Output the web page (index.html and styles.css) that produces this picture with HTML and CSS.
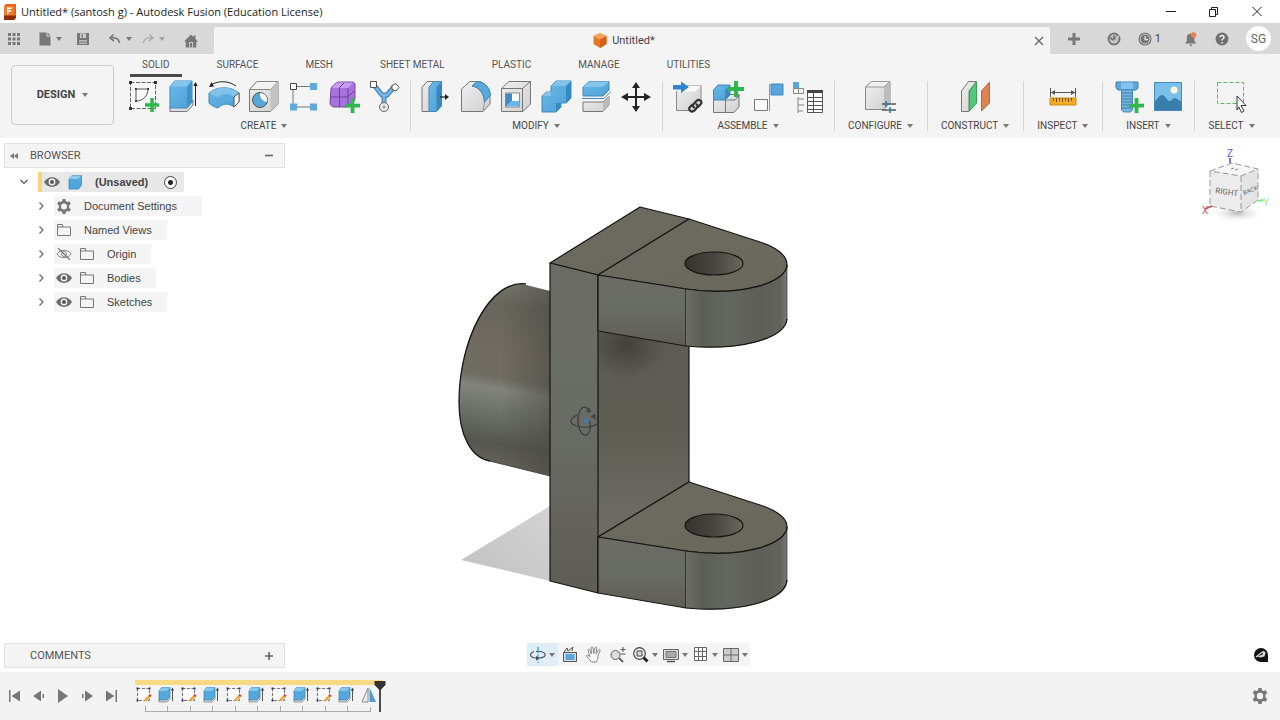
FILE: index.html
```html
<!DOCTYPE html>
<html lang="en">
<head>
<meta charset="utf-8">
<title>Untitled* (santosh g) - Autodesk Fusion (Education License)</title>
<link rel="stylesheet" href="styles.css">
</head>
<body>
<svg class="defs" aria-hidden="true">
  <defs>
    <linearGradient id="gBlue" x1="0" y1="0" x2="1" y2="1"><stop offset="0" stop-color="#6db9e8"/><stop offset="1" stop-color="#4b9fd6"/></linearGradient>
    <linearGradient id="gGray" x1="0" y1="0" x2="1" y2="1"><stop offset="0" stop-color="#f0f0f0"/><stop offset="1" stop-color="#cfcfcf"/></linearGradient>
  </defs>
  <symbol id="plus" viewBox="0 0 12 12"><path d="M4.500 0h3v4.500H12v3H7.500V12h-3V7.500H0v-3h4.500z" fill="#2eb84c"/></symbol>
  <symbol id="eye" viewBox="0 0 16 12"><path d="M0 6C4-.5 12-.5 16 6 12 12.500 4 12.500 0 6z" fill="#6a6a6a"/><circle cx="8" cy="6" r="3.400" fill="#f4f4f4"/><circle cx="8" cy="6" r="2" fill="#555"/></symbol>
  <symbol id="folder" viewBox="0 0 16 14"><path d="M1.500 12.500v-11h5v2.500h8v8.500zM1.500 4h5" fill="none" stroke="#777"/></symbol>
  <symbol id="chevron" viewBox="0 0 10 10"><path d="M3.500 1.500 7 5 3.500 8.500" fill="none" stroke="#666" stroke-width="1.200"/></symbol>
  <symbol id="gear" viewBox="0 0 16 16"><path fill-rule="evenodd" fill="#777" d="M6.500 0h3l.5 2.300 1.500.8 2.200-.8 1.600 2.700-1.800 1.600v2.800l1.800 1.600-1.600 2.700-2.200-.8-1.500.8-.5 2.300h-3L6 13.700l-1.500-.8-2.200.8L.7 11l1.800-1.600V6.600L.7 5l1.600-2.700 2.200.8L6 2.300zM8 4.800a3.200 3.200 0 1 0 0 6.400 3.200 3.200 0 0 0 0-6.400z"/></symbol>
  <symbol id="tl-sketch" viewBox="0 0 18 18"><path d="M2.500 2.500h12v12h-12z" fill="#fff" stroke="#777" stroke-dasharray="3 1.500"/><path d="M1.500 1.500h2v2h-2zM13.500 1.500h2v2h-2zM1.500 13.500h2v2h-2z" fill="#335"/><path d="m9 15.500.8-2.500 4-4 1.800 1.800-4 4z" fill="#f0a030"/><path d="m13.500 9 1.200-1 1.800 1.700-1.200 1.200z" fill="#d33"/></symbol>
  <symbol id="tl-extrude" viewBox="0 0 18 18"><path d="M2 13h8l3-3v3l-3 3H2z" fill="#ddd" stroke="#777" stroke-width=".7"/><path d="m2 5 2.500-3.500H13V10l-3 4H2z" fill="#55a8dd" stroke="#357fae" stroke-width=".7"/><path d="m2 5 2.500-3.500H13L10 5z" fill="#85c9ef"/><path d="M15.500 15V4" stroke="#555"/><path d="m13.800 4.500 1.700-3 1.700 3z" fill="#444"/></symbol>
</svg>

<header class="titlebar">
  <svg class="app-icon" width="14" height="16" viewBox="0 0 14 16"><path d="M1 2 3 0h10v13l-2 3H1z" fill="#e8641b"/><path d="M1 2h10v14H1z" fill="#f07a2c"/><path d="M1 11.500h12V14l-2 2H1z" fill="#8c2d06"/><path d="M4.700 10V4.200h4M4.700 7h3.400" fill="none" stroke="#fff" stroke-width="1.400"/></svg>
  <h1 class="window-title">Untitled* (santosh g) - Autodesk Fusion (Education License)</h1>
  <div class="window-buttons">
    <button aria-label="Minimize"><svg width="12" height="12"><path d="M1 5.500h10" stroke="#222"/></svg></button>
    <button aria-label="Restore"><svg width="12" height="12" fill="none" stroke="#222"><path d="M1.500 3.500h6v7h-6zM3.500 3.500v-2h6v7h-2"/></svg></button>
    <button aria-label="Close"><svg width="12" height="12"><path d="m1.500 1 9 9m0-9-9 9" stroke="#222"/></svg></button>
  </div>
</header>

<div class="appbar">
  <div class="quick">
    <button class="q-grid" aria-label="Data panel"><svg width="14" height="14" fill="#777"><path d="M1 1h3v3H1zM5.500 1h3v3h-3zM10 1h3v3h-3zM1 5.500h3v3H1zM5.500 5.500h3v3h-3zM10 5.500h3v3h-3zM1 10h3v3H1zM5.500 10h3v3h-3zM10 10h3v3h-3z"/></svg></button>
    <button class="q-file" aria-label="File"><svg width="14" height="16"><path d="M1.500 1.500h7v4h4v9h-11z" fill="#777"/><path d="m9.500 1.500 3 3h-3z" fill="#777"/></svg><span class="caret"></span></button>
    <button class="q-save" aria-label="Save"><svg width="14" height="14"><path d="M1 1h12v12H1z" fill="#777"/><path d="M4 1.500h6V6H4z" fill="#d0d0d0"/><path d="M5.500 2.500h1.500v3H5.500z" fill="#777"/><path d="M3 8h8v4H3z" fill="#bbb"/><path d="M3 10h8" stroke="#777"/></svg></button>
    <button class="q-undo" aria-label="Undo"><svg width="14" height="14"><path d="M5.500 2.500 2 6l4 3M2.500 6c5-.8 8.500.5 9 5" fill="none" stroke="#777" stroke-width="1.600"/></svg><span class="caret"></span></button>
    <button class="q-redo" aria-label="Redo"><svg width="14" height="14"><path d="M8.500 2.500 12 6 8 9M11.500 6c-5-.8-8.500.5-9 5" fill="none" stroke="#a8a8a8" stroke-width="1.300"/></svg><span class="caret dim"></span></button>
    <button class="q-home" aria-label="Home"><svg width="16" height="16"><path d="m1 8.500 7-7 2.500 2.500V2.500h2V6L15 8.500h-1.700v6H2.700v-6z" fill="#777"/><path d="M6 9h4v5.500H6z" fill="#c8c8c8"/><path d="M7 10h2v4H7z" fill="#777"/></svg></button>
  </div>
  <div class="doc-tab">
    <div class="doc-name"><svg width="14" height="15"><path d="m7 0 6.500 3v8L7 15 .5 11V3z" fill="#e8772a"/><path d="m7 0 6.500 3L7 6.500.5 3z" fill="#f8a75e"/><path d="M7 6.500 13.500 3v8L7 15z" fill="#d85f15"/></svg><span>Untitled*</span></div>
    <button aria-label="Close document"><svg width="10" height="10"><path d="m1 1 8 8m0-8L1 9" stroke="#666" stroke-width="1.300"/></svg></button>
  </div>
  <div class="account">
    <button class="a-new" aria-label="New tab"><svg width="14" height="14"><path d="M7 1v12M1 7h12" stroke="#777" stroke-width="3"/></svg></button>
    <button class="a-ext" aria-label="Extensions"><svg width="14" height="14"><circle cx="7" cy="7" r="5.500" fill="#c8c8c8" stroke="#777" stroke-width="2"/><path d="M7 3.500v3.500l4-3.500M3 5.500l3 2.500" fill="none" stroke="#777" stroke-width="1.800"/><path d="m9 6 3-2" stroke="#e0e0e0" stroke-width="1.500"/></svg></button>
    <button class="a-jobs" aria-label="Job status"><svg width="14" height="14"><circle cx="7" cy="7" r="6" fill="#ccc" stroke="#777" stroke-width="1.200"/><circle cx="7" cy="7" r="4.500" fill="#777"/><path d="M7 4v3.500h3" fill="none" stroke="#ddd" stroke-width="1.300"/></svg><span>1</span></button>
    <button class="a-bell" aria-label="Notifications"><svg width="14" height="16"><path d="M1 12.500 2.800 10V6.500a3.800 3.800 0 0 1 7.600 0V10l1.800 2.500zM5 13.500h3.500L7 15.500z" fill="#777"/><circle cx="9.500" cy="4" r="2.800" fill="#f27a4a"/></svg></button>
    <button class="a-help" aria-label="Help"><svg width="14" height="14"><circle cx="7" cy="7" r="6.500" fill="#707070"/><path d="M5 5.300c0-2.500 4-2.500 4 0C9 6.800 7 6.800 7 8.500M7 10v1.500" fill="none" stroke="#eee" stroke-width="1.500"/></svg></button>
    <button class="avatar">SG</button>
  </div>
</div>

<section class="ribbon">
  <button class="workspace">DESIGN<span class="caret"></span></button>
  <div class="ribbon-main">
    <nav class="tabs">
      <button class="tab active">SOLID</button><button class="tab">SURFACE</button><button class="tab">MESH</button><button class="tab">SHEET METAL</button><button class="tab">PLASTIC</button><button class="tab">MANAGE</button><button class="tab">UTILITIES</button>
    </nav>
    <div class="groups">
      <div class="group">
        <div class="tools">
          <button aria-label="Create Sketch"><svg width="32" height="34"><path d="M2.500 2.500h25v26h-25z" fill="#f8f8f8" stroke="#666" stroke-dasharray="4 1.500"/><g fill="#333"><path d="M1 1h3v3H1zM26 1h3v3h-3zM1 27h3v3H1z"/><path d="M7 8h2v2H7zM19 8h2v2h-2zM7 20h2v2H7z"/></g><path d="M8 21V9h12c0 7-5 12-12 12z" fill="none" stroke="#555"/><use href="#plus" x="17" y="18" width="14" height="14"/></svg></button>
          <button aria-label="Extrude"><svg width="32" height="34"><path d="M2 26h17l6-6v5l-6 6.500H2z" fill="#ddd" stroke="#777"/><path d="M2 6.500 6.500 1H24v21l-5 6H2z" fill="url(#gBlue)" stroke="#3f8bbd"/><path d="m2 6.500 4.500-5.500H24l-5 5.500z" fill="#82c4ea"/><path d="M19 6.500V28l5-6V1z" fill="#3f93cb"/><path d="M27.500 26V5" stroke="#222"/><path d="m25.300 6 2.200-4 2.200 4z" fill="#222"/></svg></button>
          <button aria-label="Revolve"><svg width="32" height="34"><path d="M3 5c8-5 18-4 25 1" fill="none" stroke="#222"/><path d="m1 7 2.500-5L6 6.500z" fill="#222"/><path d="M1 13c8-7 22-7 30 0v9l-5 5c-5-4-11-4-16 1-4-1-7-3-9-5z" fill="url(#gBlue)" stroke="#3f8bbd"/><path d="M1 13c8-7 22-7 30 0l-5 4c-5-4-11-4-16 0z" fill="#80c2e9"/><path d="m26 17 5-4v9l-5 5z" fill="#fff" stroke="#555"/></svg></button>
          <button aria-label="Hole"><svg width="32" height="34"><path d="M1.500 9.500 9 1.500h21V24l-7.500 7.500h-21z" fill="url(#gGray)" stroke="#777"/><path d="M1.500 9.500 9 1.500h21l-7.500 8z" fill="#f3f3f3" stroke="#888"/><path d="M22.500 9.500 30 1.500V24l-7.500 7.500z" fill="#c2c2c2"/><circle cx="12" cy="20" r="7.500" fill="#58a7da" stroke="#555"/><path d="M12 13a7.500 7.500 0 0 0 7 9c1-5-2-9-7-9z" fill="#f5f5f5"/></svg></button>
          <button aria-label="Pattern"><svg width="32" height="34"><path d="M5 6.500h20M5 27h20M5 6v21" stroke="#777"/><path d="M2.500 3.500h6v6h-6z" fill="#fff" stroke="#444"/><path d="M22 3h7v7h-7zM2 23.500h7v7H2zM22 23.500h7v7h-7z" fill="#5daade"/></svg></button>
          <button aria-label="Create Form"><svg width="32" height="34"><path d="M3 9c0-2 5-7 8-7h13c2 0 3 1 3 3v13c0 3-5 9-8 9H6c-2 0-4-2-4-4z" fill="#a772de" stroke="#7448a0"/><path d="M4 8c2-4 5-5.500 8-5.500h13L20 8z" fill="#c79bef"/><path d="M2.500 17h17l7-6M11.500 8v19M20 8v18M11 8l5-5" fill="none" stroke="#6c409c"/><use href="#plus" x="17" y="18" width="15" height="15"/></svg></button>
          <button aria-label="Derive"><svg width="32" height="34"><path d="m6 5 8 10h5l7-8M16 14v14" fill="none" stroke="#4a86b5" stroke-width="5"/><path d="m6 5 8 10h5l7-8M16 14v12" fill="none" stroke="#79b8e4" stroke-width="2.500"/><path d="M2.500 1.500h6v6h-6zM24 5.500l4-2 3 4-3 3.500-4-1.500z" fill="#fff" stroke="#555"/><circle cx="16" cy="27" r="4.500" fill="#e8e8e8" stroke="#666"/><circle cx="16" cy="27" r="1.500" fill="#999"/></svg></button>
        </div>
        <button class="menu">CREATE<span class="caret"></span></button>
      </div>
      <div class="group">
        <div class="tools">
          <button aria-label="Press Pull"><svg width="32" height="34"><path d="m2 7.500 5-6h8l-5 6v24H2z" fill="url(#gGray)" stroke="#777"/><path d="m9 7.500 4.500-6h8V26l-5 5.500H9z" fill="url(#gBlue)" stroke="#4288b8"/><path d="M16.500 7.500V31l5-5.500V1.500z" fill="#3a86bd"/><path d="M20 17h6" stroke="#222" stroke-width="1.300"/><path d="m25 14 4 3-4 3z" fill="#222"/></svg></button>
          <button aria-label="Fillet"><svg width="32" height="34"><path d="M1.500 9 10 1.500h9c6 1 10 7 11 13V24l-7 7.500H1.500z" fill="url(#gGray)" stroke="#777"/><path d="M12 6C19 7 24 13 24.500 22L23 31.500" fill="none" stroke="#999"/><path d="M12 6 17 1.500C25 2 30 8 30.500 15l-6 7C24 13 19 7 12 6z" fill="#58a9dd" stroke="#3b86ba"/></svg></button>
          <button aria-label="Shell"><svg width="32" height="34"><path d="M1.500 8.500 9 1.500h21.500V24L23 31.500H1.500z" fill="url(#gGray)" stroke="#777"/><path d="M1.500 8.500h21L30.500 1.500M22.500 8.500v23" fill="none" stroke="#777"/><path d="M5.500 13h14v14h-14z" fill="#fff" stroke="#888"/><path d="M6 13.500h6V21l-6 5.500z" fill="#4189be"/><path d="m6 26.500 6-5.500h7.500v5.500z" fill="#6db5e4"/></svg></button>
          <button aria-label="Combine"><svg width="32" height="34"><path d="m2 16 4-4h5V6l5-5h15v17l-5 5h-5v4l-5 5H2z" fill="url(#gBlue)" stroke="#3f8bbd"/><path d="m11 6 5-5h15l-5 5zM2 16l4-4h5v4z" fill="#82c3e9"/><path d="m26 6 5-5v17l-5 5zM16 23h5v4l-5 5z" fill="#3789c3"/></svg></button>
          <button aria-label="Split"><svg width="32" height="34"><path d="m3 7 6-5.500h20V10l-6 6H3z" fill="url(#gBlue)" stroke="#4288b8"/><path d="m3 7 6-5.500h20L23 7z" fill="#85c5eb"/><path d="M2 18.500h22l7-7" fill="none" stroke="#4088c0"/><path d="M3 22h20l6-5.500V25l-6 6.500H3z" fill="url(#gGray)" stroke="#777"/><path d="M23 22v9l6-6v-8.500z" fill="#bbb"/></svg></button>
          <button aria-label="Move"><svg width="32" height="34"><path d="M16 5v24M4 17h24" stroke="#222" stroke-width="2"/><path d="m16 2 4 6h-8zM16 32l4-6h-8zM1 17l7-4v8zM31 17l-7-4v8z" fill="#222"/></svg></button>
        </div>
        <button class="menu">MODIFY<span class="caret"></span></button>
      </div>
      <div class="group">
        <div class="tools">
          <button aria-label="Insert Component"><svg width="32" height="34"><path d="M4.500 11.500 10 5.500h19V23l-6 7.500H4.500z" fill="url(#gGray)" stroke="#888"/><path d="m4.500 11.500 5.500-6h19l-6 6z" fill="#fafafa"/><path d="M1 5h8V1.500L17 7l-8 6V9.500H1z" fill="#2e86d0"/><g fill="none" stroke="#333" stroke-width="2.200"><path d="M20.500 24.500 18 27c-3 3 2 6 4.500 3.500l2.500-3c1.500-2 0-3.500-1.500-3.500"/><path d="m25.500 27.500 3-3c3-3-1.500-6-4-3.500l-3 3c-1.500 2 0 3.500 1.500 3.500"/></g></svg></button>
          <button aria-label="New Component"><svg width="32" height="34"><path d="M1.500 20 6 14.500h21V27l-5 5.500H1.500z" fill="url(#gGray)" stroke="#777"/><path d="M13.500 20H23l5-5M13.500 20v12.500" fill="none" stroke="#777"/><path d="m1.500 10 4.500-5h12v10l-5 5H1.500z" fill="url(#gBlue)" stroke="#4288b8"/><path d="M13 10v10l5-5V5z" fill="#388ac2"/><use href="#plus" x="16" y="1" width="16" height="16"/></svg></button>
          <button aria-label="Joint"><svg width="32" height="34"><path d="M2.500 19.500h13v11h-13z" fill="#fff" stroke="#777"/><path d="M17.500 4v27" stroke="#a69086"/><path d="M19 4h12v11H19z" fill="#58a6dc" stroke="#3d8bc0"/></svg></button>
          <button aria-label="Bill of Materials"><svg width="34" height="34"><path d="M2 2h6v6H2z" fill="#58a6dc"/><path d="M2.500 8.500h5v5h-5zM7.500 8.500h5v5h-5zM7 17v16M7 19h6M7 25h6M7 31h5" fill="none" stroke="#888"/><path d="M16.500 10.500h15v22h-15z" fill="#fff" stroke="#555"/><path d="M16 10h16v3H16z" fill="#444"/><path d="M16 17.500h16M16 21.500h16M16 25.500h16M16 29.500h16M22.500 13v19" stroke="#555"/></svg></button>
        </div>
        <button class="menu">ASSEMBLE<span class="caret"></span></button>
      </div>
      <div class="group">
        <div class="tools"><button aria-label="Configure"><svg width="32" height="34"><path d="m1.500 7 6-5.500H26V23l-6 6.500H1.500z" fill="url(#gGray)" stroke="#888"/><path d="M20 7v22l6-6V1.500z" fill="#bcbcbc"/><path d="m1.500 7 6-5.500H26L20 7z" fill="#f0f0f0" stroke="#999"/><path d="M18 24h14M18 30h14" stroke="#555" stroke-width="1.500"/><path d="M22 21v6M26 27v6" stroke="#3180b5" stroke-width="1.700"/></svg></button></div>
        <button class="menu">CONFIGURE<span class="caret"></span></button>
      </div>
      <div class="group">
        <div class="tools"><button aria-label="Offset Plane"><svg width="32" height="34"><path d="m2.500 11 7-9.500h8L10 11v20.500H2.500z" fill="url(#gGray)" stroke="#777"/><path d="m10.500 11 7-9v21l-7 8z" fill="#50c878" stroke="#3b9e5a"/><path d="m22.500 11 8-9v21l-8 8z" fill="#dd8250" stroke="#b8683c"/></svg></button></div>
        <button class="menu">CONSTRUCT<span class="caret"></span></button>
      </div>
      <div class="group">
        <div class="tools"><button aria-label="Measure"><svg width="32" height="34"><path d="M3.500 8v9M28.500 8v9M4 12.500h24" stroke="#555"/><path d="m4 12.500 4-2.500v5zM28 12.500l-4-2.500v5z" fill="#555"/><path d="M3 18h26v7H3z" fill="#f1ac24" stroke="#d08d14"/><path d="M6.500 18v3M9.500 18v4M12.500 18v3M15.500 18v4M18.500 18v3M21.500 18v4M24.500 18v3" stroke="#694d11"/></svg></button></div>
        <button class="menu">INSPECT<span class="caret"></span></button>
      </div>
      <div class="group">
        <div class="tools">
          <button aria-label="Insert Fastener"><svg width="32" height="34"><path d="M4 2h22v6l-2 2H6L4 8z" fill="#5ca9dc" stroke="#3b7faf"/><path d="M9 2.500h12V9H9z" fill="#84c4ec"/><path d="M9.500 10h11v20l-2 2h-7l-2-2z" fill="#74b6e2" stroke="#4989b6"/><path d="M9 13h12M9 16h12M9 19h12M9 22h12M9 25h12M9 28h12" stroke="#417fad"/><use href="#plus" x="17" y="18" width="15" height="15"/></svg></button>
          <button aria-label="Insert Image"><svg width="32" height="34"><path d="M2.500 2.500h27v28h-27z" fill="#7ac0eb" stroke="#4588b6"/><circle cx="22" cy="10" r="3.500" fill="#fff8dc"/><path d="M3 21c3-2 4-6 7-6 4 0 4 6 8 6 2 0 2-3 5-3s3 3 6 3v9H3z" fill="#397fae"/></svg></button>
        </div>
        <button class="menu">INSERT<span class="caret"></span></button>
      </div>
      <div class="group">
        <div class="tools"><button aria-label="Select"><svg width="32" height="34"><path d="M2.500 2.500h26v21h-26z" fill="none" stroke="#5cb85c" stroke-dasharray="4 2"/><path d="m22 16 9 9.500h-5l3 5.500-2.500 1.500-2.700-5.500L22 30z" fill="#fff" stroke="#333"/></svg></button></div>
        <button class="menu">SELECT<span class="caret"></span></button>
      </div>
    </div>
  </div>
</section>

<main class="viewport">
  <svg class="scene" viewBox="0 138 1280 534" role="img" aria-label="Clevis bracket model">
    <defs>
      <linearGradient id="cyl" gradientUnits="userSpaceOnUse" x1="525" y1="285" x2="495" y2="470"><stop offset="0" stop-color="#77776e"/><stop offset=".12" stop-color="#67655c"/><stop offset=".38" stop-color="#716c61"/><stop offset=".51" stop-color="#6f6c63"/><stop offset=".57" stop-color="#82847d"/><stop offset=".7" stop-color="#6d6f69"/><stop offset=".86" stop-color="#555650"/><stop offset="1" stop-color="#65645a"/></linearGradient>
      <linearGradient id="cylShade" gradientUnits="userSpaceOnUse" x1="460" y1="0" x2="550" y2="0"><stop offset=".45" stop-color="#45453e" stop-opacity="0"/><stop offset="1" stop-color="#45453e" stop-opacity=".5"/></linearGradient>
      <linearGradient id="front" x1="0" y1="0" x2="0" y2="1"><stop offset="0" stop-color="#6b6c65"/><stop offset=".5" stop-color="#696b65"/><stop offset="1" stop-color="#5e5d55"/></linearGradient>
      <linearGradient id="round" gradientUnits="userSpaceOnUse" x1="686" y1="0" x2="787" y2="0"><stop offset="0" stop-color="#6c6d67"/><stop offset=".16" stop-color="#5d5e58"/><stop offset=".4" stop-color="#646660"/><stop offset=".75" stop-color="#5d5e57"/><stop offset=".94" stop-color="#62645d"/><stop offset="1" stop-color="#7b7c74"/></linearGradient>
      <linearGradient id="top" x1="0" y1="0" x2="1" y2="1"><stop offset="0" stop-color="#6d6a61"/><stop offset="1" stop-color="#6a675d"/></linearGradient>
      <linearGradient id="inner" x1="0" y1="0" x2="0" y2="1"><stop offset="0" stop-color="#5c5c54"/><stop offset=".5" stop-color="#5e5e55"/><stop offset="1" stop-color="#6e6e66"/></linearGradient>
      <linearGradient id="shadow" x1="0" y1="1" x2="1" y2="0"><stop offset="0" stop-color="#c2c2c2"/><stop offset="1" stop-color="#d3d3d3"/></linearGradient>
      <linearGradient id="bore" x1="0" y1="0" x2="1" y2="0"><stop offset="0" stop-color="#34342f"/><stop offset=".5" stop-color="#47453f"/><stop offset="1" stop-color="#68685f"/></linearGradient>
      <radialGradient id="dark"><stop offset="0" stop-color="#36362f" stop-opacity=".7"/><stop offset="1" stop-color="#36362f" stop-opacity="0"/></radialGradient>
      <clipPath id="innerClip"><path d="M598 331l91 15v136l-91 55z"/></clipPath>
    </defs>
    <path d="M461 560l89-54v75z" fill="url(#shadow)"/>
    <path d="M550 291l-28-7c-34-2-63 56-63 118 0 35 13 56 29 59l62 15z" fill="url(#cyl)"/>
    <path d="M550 291l-28-7c-34-2-63 56-63 118 0 35 13 56 29 59l62 15z" fill="url(#cylShade)"/>
    <path d="M526 284c-36-5-67 56-67 118 0 35 13 56 31 59" fill="none" stroke="#161612" stroke-width="1.300"/>
    <path d="M490 461l60 15" stroke="#444" stroke-width=".8"/>
    <path d="M598 331l91 15v136l-91 55z" fill="url(#inner)"/>
    <ellipse cx="626" cy="345" rx="40" ry="34" fill="url(#dark)" clip-path="url(#innerClip)"/>
    <g stroke="#161612" stroke-width="1.200" stroke-linejoin="round">
      <path d="M689 346v136l-91 55" fill="none"/>
      <path d="M640 207l49 12-91 56-48-12z" fill="url(#top)"/>
      <path d="M550 263l48 12v318l-48-12z" fill="url(#front)"/>
      <path d="M689 219l71 23c18 6 27 13 27 23 0 17-44 32-101 24l-88-14z" fill="url(#top)"/>
      <path d="M598 275l88 14v57l-88-15z" fill="url(#front)"/>
      <path d="M686 289c57 8 101-7 101-24v57c-4 17-48 30-101 24z" fill="url(#round)" stroke="none"/>
      <path d="M686 289c57 8 101-7 101-24M787 319c-2 20-48 32-101 27" fill="none"/>
      <path d="M787 265v55" stroke-width=".6"/>
      <ellipse cx="714" cy="263.500" rx="29" ry="11.500" fill="url(#bore)"/>
      <path d="M689 482l71 23c18 6 27 13 27 22 0 17-44 32-101 24l-88-14z" fill="url(#top)"/>
      <path d="M598 537l88 14v57l-88-15z" fill="url(#front)"/>
      <path d="M686 551c57 8 101-7 101-24v57c-4 17-48 30-101 24z" fill="url(#round)" stroke="none"/>
      <path d="M686 551c57 8 101-7 101-24M787 580c-2 21-48 33-101 28" fill="none"/>
      <path d="M787 527v55" stroke-width=".6"/>
      <ellipse cx="714" cy="525.500" rx="29" ry="11.500" fill="url(#bore)"/>
    </g>
    <g fill="none" stroke="#3c3e3c" stroke-width="1.200"><path d="M577 415c-8 4-8 9 0 11 7 2 15 1 20-2M591 416l5 3"/><path d="M589 411c-3-7-10-5-11 8 0 12 5 17 8 16 4-1 5-8 4-14M586 411h5M589 408v5M592 416h4M594 414v4"/><circle cx="586" cy="421" r="1.800" fill="#3e7db5" stroke="#3e7db5"/></g>
  </svg>

  <div class="overlay">
    <aside class="browser">
      <div class="panel-head">
        <button class="collapse" aria-label="Collapse browser"><svg width="10" height="8"><path d="M5 1v6L1 4zM9 1v6L5 4z" fill="#777"/></svg></button>
        <h2>BROWSER</h2>
        <button aria-label="Minimize browser"><svg width="10" height="10"><path d="M1 4.500h8" stroke="#666" stroke-width="1.600"/></svg></button>
      </div>
      <ul class="tree">
        <li class="row root"><button aria-label="Collapse"><svg width="10" height="10"><path d="M1.500 3 5 6.500 8.500 3" fill="none" stroke="#555" stroke-width="1.200"/></svg></button>
          <span class="chip"><svg width="16" height="12"><use href="#eye"/></svg><svg width="16" height="16"><path d="m2 5 3-3.500h9.500V11l-3 4H2z" fill="#50a5dc" stroke="#3d89bb" stroke-width=".8"/><path d="m2 5 3-3.500h9.500l-3 3.500z" fill="#8bcbee"/></svg><b>(Unsaved)</b><input type="radio" name="active" aria-label="Activate component" checked></span></li>
        <li class="row"><button aria-label="Expand"><svg width="10" height="10"><use href="#chevron"/></svg></button><span class="chip wide"><svg width="16" height="15"><use href="#gear"/></svg><span>Document Settings</span></span></li>
        <li class="row"><button aria-label="Expand"><svg width="10" height="10"><use href="#chevron"/></svg></button><span class="chip"><svg width="16" height="14"><use href="#folder"/></svg><span>Named Views</span></span></li>
        <li class="row"><button aria-label="Expand"><svg width="10" height="10"><use href="#chevron"/></svg></button><span class="chip"><svg width="16" height="12"><path d="M1 6C4 1 12 1 15 6 12 11 4 11 1 6z" fill="none" stroke="#888"/><circle cx="8" cy="6" r="2.500" fill="none" stroke="#888"/><path d="m2 0 12 12" stroke="#777" stroke-width="1.200"/></svg><svg width="16" height="14"><use href="#folder"/></svg><span>Origin</span></span></li>
        <li class="row"><button aria-label="Expand"><svg width="10" height="10"><use href="#chevron"/></svg></button><span class="chip"><svg width="16" height="12"><use href="#eye"/></svg><svg width="16" height="14"><use href="#folder"/></svg><span>Bodies</span></span></li>
        <li class="row"><button aria-label="Expand"><svg width="10" height="10"><use href="#chevron"/></svg></button><span class="chip"><svg width="16" height="12"><use href="#eye"/></svg><svg width="16" height="14"><use href="#folder"/></svg><span>Sketches</span></span></li>
      </ul>
    </aside>

    <svg class="viewcube" width="72" height="82" viewBox="0 0 72 82" role="img" aria-label="View cube">
      <defs><radialGradient id="cubeShadow"><stop offset="0" stop-color="#bbb"/><stop offset="1" stop-color="#fff" stop-opacity="0"/></radialGradient></defs>
      <ellipse cx="37" cy="64" rx="28" ry="10" fill="url(#cubeShadow)"/>
      <path d="M10 22l22-8 26 6v31L41 63l-31-6z" fill="#ececec"/>
      <path d="M10 22l22-8 26 6-17 7z" fill="#f7f7f7"/><path d="M41 27l17-7v31L41 63z" fill="#e4e4e4"/>
      <path d="M10 22l22-8 26 6-17 7zM10 22v35l31 6 17-12V20M41 27v36" fill="none" stroke="#999" stroke-dasharray="6 3"/>
      <path d="M30 14V9" stroke="#4646c8" stroke-width="1.500"/><path d="m12 57-7 3" stroke="#c44" stroke-width="1.500"/><path d="m58 52 5-1" stroke="#7e7" stroke-width="2"/>
      <text x="27" y="8" class="axis z">Z</text><text x="2" y="65" class="axis x">X</text><text x="63" y="57" class="axis y">Y</text>
      <text class="face" transform="translate(15 44) rotate(8)">RIGHT</text>
      <text class="face small" transform="translate(44 46) rotate(-22)">BACK</text>
      <path d="m31 20 3-1m1 2 3-1" stroke="#888"/>
    </svg>

    <aside class="comments"><div class="panel-head"><h2>COMMENTS</h2><button aria-label="Add comment"><svg width="10" height="10"><path d="M5 1v8M1 5h8" stroke="#666" stroke-width="1.600"/></svg></button></div></aside>

    <div class="navbar">
      <button class="on drop" aria-label="Orbit"><svg width="18" height="16"><path d="M5 4.500C-1 7 1 11 9 11s10-4.500 3-6.500H7" fill="none" stroke="#555" stroke-width="1.200"/><path d="M9 0v16" stroke="#3d9bd3" stroke-width="1.300" stroke-dasharray="6 1.500"/><path d="m7 9 3 2-3 2.500z" fill="#444"/></svg><span class="caret"></span></button>
      <button aria-label="Look At"><svg width="18" height="18"><path d="M2.500 6.500h13v9h-13zM3 6l3-4 1 3 5-4-1 4" fill="#ddd" stroke="#555"/><path d="M4.500 8h9v6h-9z" fill="#58a6dc"/></svg></button>
      <button aria-label="Pan"><svg width="18" height="18"><path d="M6.500 16C5 13 2 12 1.500 9.500c1-1 2 0 3.500 1L3 4.500C3 3 4.500 3 5 4.500L6.500 8 6 2c0-1.500 1.800-1.500 2 0l.7 5.500L10 2c.3-1.500 2-1 1.700.5L11 8l2.500-4c.8-1.200 2.200-.5 1.500 1L13 10c0 3-1 4-1.500 6z" fill="#f6f6f6" stroke="#888"/></svg></button>
      <button aria-label="Zoom"><svg width="18" height="18"><circle cx="6.500" cy="9" r="4.500" fill="#ddd" stroke="#666"/><path d="m10 12 4 4" stroke="#666" stroke-width="2"/><path d="M14 1v5M11.500 3.500h5M11.500 8h5" stroke="#555"/></svg></button>
      <button class="drop" aria-label="Fit"><svg width="18" height="18"><circle cx="7.500" cy="7.500" r="5.800" fill="#eee" stroke="#444" stroke-width="1.200"/><path d="M5 5h5v5H5z" fill="#ddd" stroke="#444"/><path d="m11.500 11.500 4 4" stroke="#222" stroke-width="3"/></svg><span class="caret"></span></button>
      <button class="drop" aria-label="Display Settings"><svg width="18" height="18"><path d="M1.500 3.500h15v10h-15z" fill="#ddd" stroke="#666"/><path d="M4 5.500h10v6H4z" fill="#aaa" stroke="#777"/><path d="M5 15.500h8" stroke="#555" stroke-width="1.500"/></svg><span class="caret"></span></button>
      <button class="drop" aria-label="Grid and Snaps"><svg width="18" height="18"><path d="M2.500 1.500h12v13h-12zM6.500 1.500v13M10.500 1.500v13M2.500 5.500h12M2.500 10.500h12" fill="#fff" stroke="#666"/></svg><span class="caret"></span></button>
      <button class="drop" aria-label="Viewports"><svg width="18" height="18"><path d="M1.500 2.500h15v13h-15zM9 3v12M2 9h14" fill="#ccc" stroke="#666"/></svg><span class="caret"></span></button>
    </div>

    <button class="assistant" aria-label="Autodesk Assistant"><svg width="16" height="16"><path d="M1 8a7 7 0 1 1 14 0v7H8a7 7 0 0 1-7-7z" fill="#111"/><path d="m3 10 7-5.500M5 10l5-2 1-4M7 10l4-1 1-4" fill="none" stroke="#ddd" stroke-width="1.200"/></svg></button>
  </div>
</main>

<footer class="timeline">
  <div class="playback">
    <button aria-label="Go to start"><svg width="14" height="14" fill="#777"><path d="M1 1h1.500v12H1zM12 1.500v11L3.500 7z"/></svg></button>
    <button aria-label="Step back"><svg width="14" height="14" fill="#777"><path d="M9 1.500v11L1 7zM10.500 5H12v4h-1.500z"/></svg></button>
    <button aria-label="Play"><svg width="14" height="14" fill="#777"><path d="M2 0v14l10-7z"/></svg></button>
    <button aria-label="Step forward"><svg width="14" height="14" fill="#777"><path d="M5 1.500v11L13 7zM2 5h1.500v4H2z"/></svg></button>
    <button aria-label="Go to end"><svg width="14" height="14" fill="#777"><path d="M11.500 1H13v12h-1.500zM2 1.500v11L10.500 7z"/></svg></button>
  </div>
  <div class="track">
    <ol>
      <li><svg width="18" height="18"><use href="#tl-sketch"/></svg></li><li><svg width="18" height="18"><use href="#tl-extrude"/></svg></li>
      <li><svg width="18" height="18"><use href="#tl-sketch"/></svg></li><li><svg width="18" height="18"><use href="#tl-extrude"/></svg></li>
      <li><svg width="18" height="18"><use href="#tl-sketch"/></svg></li><li><svg width="18" height="18"><use href="#tl-extrude"/></svg></li>
      <li><svg width="18" height="18"><use href="#tl-sketch"/></svg></li><li><svg width="18" height="18"><use href="#tl-extrude"/></svg></li>
      <li><svg width="18" height="18"><use href="#tl-sketch"/></svg></li><li><svg width="18" height="18"><use href="#tl-extrude"/></svg></li>
      <li><svg width="18" height="18"><path d="M8 2v14H2z" fill="#eee" stroke="#888"/><path d="M9.500 1.500v14.500H16z" fill="#4f9fd6"/></svg></li>
    </ol>
    <svg class="marker" width="12" height="32"><path d="M.5 1h11v4L7 9.500H5L.5 5z" fill="#333"/><path d="M6 8v24" stroke="#222" stroke-width="1.600"/></svg>
  </div>
  <button class="settings" aria-label="Timeline settings"><svg width="16" height="16"><use href="#gear"/></svg></button>
</footer>
</body>
</html>
```
FILE: styles.css
```css
* { box-sizing: border-box; }
body {
  margin: 0;
  min-height: 100vh;
  display: flex;
  flex-direction: column;
  background: #fff;
  color: #444;
  font: 12px/16px Roboto, "Liberation Sans", sans-serif;
}
button {
  display: flex;
  align-items: center;
  justify-content: center;
  margin: 0;
  padding: 0;
  border: 0;
  background: none;
  color: inherit;
  font: inherit;
}
h1, h2 { margin: 0; font: inherit; }
ul, ol { margin: 0; padding: 0; list-style: none; }
svg { display: block; flex: none; }
.defs { position: absolute; width: 0; height: 0; }
.caret {
  flex: none;
  border: 3px solid transparent;
  border-top: 4px solid #777;
  border-bottom: 0;
}
.caret.dim { border-top-color: #a0a0a0; }

/* Window title */
.titlebar { display: flex; align-items: center; height: 23px; padding-left: 3px; }
.window-title { margin-left: 4px; color: #222; font: 11px/16px "Open Sans", sans-serif; }
.window-buttons { display: flex; margin-left: auto; padding-right: 2px; }
.window-buttons button { width: 43px; height: 22px; }

/* Application bar */
.appbar { display: flex; align-items: flex-end; height: 31px; background: #d8d8d8; }
.quick { display: flex; align-items: center; width: 214px; height: 31px; padding-left: 7px; }
.quick button { gap: 4px; }
.q-file { margin-left: 17px; }
.q-save { margin-left: 14px; }
.q-undo { margin-left: 18px; }
.q-redo { margin-left: 9px; }
.q-home { margin-left: 18px; padding-top: 5px; }
.doc-tab {
  flex: 1;
  display: flex;
  align-items: center;
  height: 27px;
  padding-right: 6px;
  background: #f4f4f4;
  border-radius: 2px 2px 0 0;
  font-size: 11px;
}
.doc-name { flex: 1; display: flex; align-items: center; justify-content: center; gap: 5px; }
.account { display: flex; align-items: center; height: 31px; padding: 0 9px 0 17px; font-size: 11px; }
.account button { gap: 3px; }
.a-ext { margin-left: 26px; }
.a-jobs { margin-left: 17px; }
.a-bell { margin-left: 23px; }
.a-help { margin-left: 17px; }
.account .avatar { width: 25px; height: 25px; margin-left: 17px; border-radius: 50%; background: #fff; color: #666; font-size: 12px; }

/* Ribbon */
.ribbon { display: flex; height: 84px; background: #f4f4f4; font-size: 10px; }
.workspace {
  flex: none;
  gap: 7px;
  width: 103px;
  height: 60px;
  margin: 11px 4px 0 11px;
  border: 1px solid #ccc;
  border-radius: 4px;
  font-size: 11px;
  font-weight: 700;
}
.ribbon-main { flex: 1; }
.tabs { display: flex; gap: 23px; padding-left: 12px; }
.tab { height: 23px; padding: 2px 12px 0; border-bottom: 3px solid transparent; color: #555; }
.tab.active { border-color: #4a4a4a; }
.groups { display: flex; }
.group { display: flex; flex-direction: column; align-items: center; padding: 0 6px; position: relative; }
.group + .group::before {
  content: "";
  position: absolute;
  left: 0;
  top: 4px;
  width: 1px;
  height: 50px;
  background: #d4d4d4;
}
.tools { display: flex; height: 40px; }
.tools button { width: 40px; }
.menu { gap: 5px; padding: 0 8px; height: 18px; }

/* Canvas with panels over it */
.viewport { flex: 1; display: grid; min-height: 534px; }
.scene { grid-area: 1 / 1; width: 100%; height: 100%; }
.overlay {
  grid-area: 1 / 1;
  z-index: 1;
  display: grid;
  grid-template-columns: 1fr auto 1fr;
  grid-template-rows: 1fr auto;
  padding: 5px 8px 4px 4px;
  align-items: end;
}
.browser { grid-area: 1 / 1; align-self: start; width: 281px; }
.viewcube { grid-area: 1 / 3; align-self: start; justify-self: end; margin-top: 6px; }
.comments { grid-area: 2 / 1; width: 281px; }
.panel-head { display: flex; align-items: center; height: 25px; padding: 0 10px 0 4px; background: #f4f4f4; border: 1px solid #e2e2e2; font-size: 11px; }
.panel-head h2 { flex: 1; color: #555; }
.collapse { margin-right: 11px; }
.comments .panel-head { padding-left: 25px; }

.tree { padding: 2px 0 0 13px; font: 11px/16px "Liberation Sans", Arial, sans-serif; }
.row { display: flex; align-items: center; height: 24px; padding-left: 17px; }
.row > button { width: 14px; height: 20px; margin-right: 6px; }
.row.root { padding-left: 0; }
.root > button { margin-right: 7px; }
.chip { display: flex; align-items: center; gap: 7px; height: 20px; padding: 0 15px 0 2px; background: #f5f5f5; }
.chip span { margin-left: 5px; }
.chip.wide { padding-right: 25px; }
.root .chip { padding: 0 7px 0 2px; border-left: 4px solid #f6d67b; background: #e8e8e8; }
.chip b { margin: 0 9px 0 5px; }
.chip input {
  appearance: none;
  width: 13px;
  height: 13px;
  margin: 0;
  border: 1px solid #444;
  border-radius: 50%;
  background: radial-gradient(circle, #222 0 2px, #fff 3px);
}

.axis { font: 10px Roboto, sans-serif; }
.z { fill: #5858cc; }
.x { fill: #d06070; }
.y { fill: #9de89d; }
.face { font: 8px Roboto, sans-serif; fill: #666; }
.small { font-size: 6px; }

.navbar { grid-area: 2 / 2; display: flex; height: 23px; margin-bottom: 2px; background: #f4f4f4; }
.navbar button { width: 24px; }
.navbar .drop { width: 30px; gap: 2px; }
.navbar .on { background: #dfeef6; width: 31px; }
.assistant { grid-area: 2 / 3; justify-self: end; margin: 0 3px 5px 0; }

/* Timeline */
.timeline { display: flex; align-items: flex-start; height: 48px; padding: 0 12px 0 3px; background: #f3f3f3; }
.playback { display: flex; padding-top: 12px; }
.playback button { width: 24px; height: 24px; }
.track { position: relative; width: 247px; margin: 8px 0 0 12px; border-top: 5px solid #f8d984; }
.track ol { display: grid; grid-template-columns: repeat(11, 1fr); }
.track li { position: relative; height: 27px; padding-top: 1px; }
.track li::after {
  content: "";
  position: absolute;
  left: 10px;
  bottom: 0;
  width: 100%;
  height: 5px;
  border: solid #aaa;
  border-width: 0 0 1px 1px;
}
.track li:last-child::after { width: 1px; border-bottom: 0; }
.marker { position: absolute; right: -4px; top: -5px; }
.settings { margin: 16px 0 0 auto; }
```
